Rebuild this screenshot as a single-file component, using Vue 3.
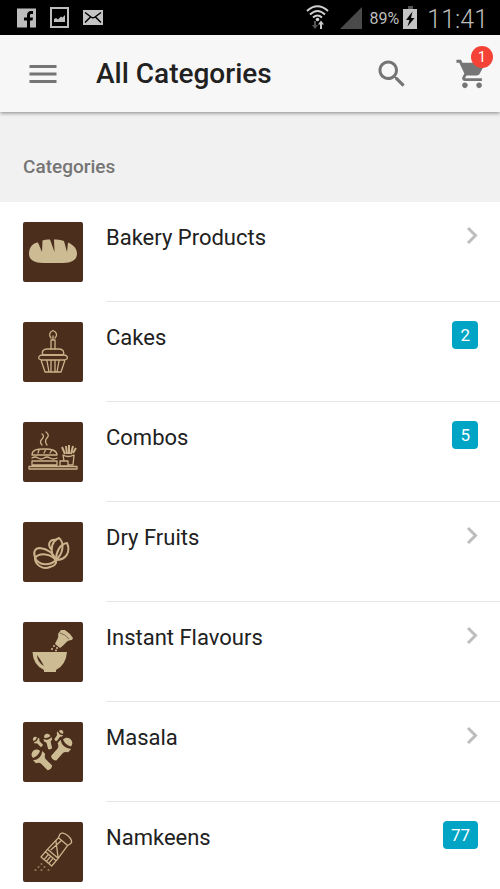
<script setup>
const categories = [
  { name: 'Bakery Products', icon: 'bread' },
  { name: 'Cakes', icon: 'cake', count: 2 },
  { name: 'Combos', icon: 'combo', count: 5 },
  { name: 'Dry Fruits', icon: 'nuts' },
  { name: 'Instant Flavours', icon: 'bowl' },
  { name: 'Masala', icon: 'cloves' },
  { name: 'Namkeens', icon: 'shaker', count: 77 },
]
const cartCount = 1

// Each clove: position, rotation and scale
const cloves = [
  'translate(17 36) rotate(-45) scale(.82)',
  'translate(40.5 25) rotate(41) scale(.88)',
  'translate(25 18) rotate(-14) scale(.52)',
  'translate(14 19) rotate(-45) scale(.4)',
  'translate(36.500 12.500) rotate(35) scale(.4)',
]
</script>

<template>
  <div class="screen">
    <div class="status">
      <svg class="st-icon" width="19" height="20" viewBox="0 0 19 20">
        <rect width="19" height="19" y="0.5" fill="#bdbdbd" />
        <path d="M10 20v-7.500H7V9.500h3V7.500C10 4.500 11.500 3 14 3h2v3h-1.500C13.300 6 13 6.500 13 7.500v2h3l-.5 3H13V20z" fill="#000" />
      </svg>
      <svg class="st-icon" width="19" height="21" viewBox="0 0 19 21">
        <rect x="1" y="1" width="17" height="19" fill="none" stroke="#bdbdbd" stroke-width="2" />
        <path d="M4 15v-3l2-1 2 1.500 3-3 1.500 1L15 8v7z" fill="#bdbdbd" />
      </svg>
      <svg class="st-icon" width="20" height="15" viewBox="0 0 20 15">
        <rect width="20" height="15" fill="#c4c4c4" />
        <path d="M2 2.500l6 4.500q2 1.500 4 0l6-4.500M2 12.500L7.500 7M18 12.500L12.500 7" fill="none" stroke="#000" stroke-width="1.500" />
      </svg>
      <span class="spacer"></span>
      <svg class="wifi" width="23" height="25" viewBox="0 0 23 25">
        <g fill="none" stroke="#d0d0d0" stroke-width="2">
          <path d="M1 6Q11.500-3.500 22 6" />
          <path d="M4 9.500Q11.500 2.500 19 9.500" />
          <path d="M7 12.500Q11.500 8.500 16 12.500" />
        </g>
        <circle cx="11.500" cy="14.500" r="1.800" fill="#d0d0d0" />
        <path d="M8 16h2v4h2l-3 4-3-4h2z" fill="#555" />
        <path d="M14 24v-4.500h-2l3-4 3 4h-2V24z" fill="#c8c8c8" />
      </svg>
      <svg class="signal" width="22" height="22" viewBox="0 0 22 22"><path d="M22 0v22H0z" fill="#4a4a4a" /></svg>
      <span class="percent">89%</span>
      <svg class="battery" width="14" height="23" viewBox="0 0 14 23">
        <rect x="5" width="5" height="3" fill="#555" />
        <rect y="3" width="14" height="20" fill="#c4c4c4" />
        <path d="M9.500 5.500L3 14h3.500L4.500 20.500 11.500 12H8z" fill="#000" />
      </svg>
      <time class="clock">11:41</time>
    </div>

    <header class="bar">
      <button class="icon-btn" type="button" aria-label="Menu">
        <svg width="36" height="36" viewBox="0 0 24 24"><path d="M3 18h18v-2H3v2zm0-5h18v-2H3v2zm0-7v2h18V6H3z" /></svg>
      </button>
      <h1 class="title">All Categories</h1>
      <button class="icon-btn" type="button" aria-label="Search">
        <svg width="36" height="36" viewBox="0 0 24 24"><path d="M15.500 14h-.79l-.28-.27C15.410 12.590 16 11.110 16 9.500 16 5.910 13.090 3 9.500 3S3 5.910 3 9.500 5.910 16 9.500 16c1.610 0 3.090-.59 4.230-1.570l.27.28v.79l5 4.990L20.490 19l-4.990-5zm-6 0C7.010 14 5 11.990 5 9.500S7.010 5 9.500 5 14 7.010 14 9.500 11.990 14 9.500 14z" /></svg>
      </button>
      <button class="icon-btn cart" type="button" aria-label="Cart">
        <svg width="34" height="34" viewBox="0 0 24 24"><path d="M7 18c-1.100 0-1.990.9-1.990 2S5.900 22 7 22s2-.9 2-2-.9-2-2-2zM1 2v2h2l3.600 7.590-1.350 2.450c-.16.280-.25.610-.25.960 0 1.100.9 2 2 2h12v-2H7.420c-.14 0-.25-.11-.25-.25l.03-.12.900-1.630h7.450c.75 0 1.410-.41 1.750-1.030l3.580-6.490c.08-.14.120-.31.120-.48 0-.55-.45-1-1-1H5.210l-.94-2H1zm16 16c-1.100 0-1.990.9-1.990 2s.89 2 1.990 2 2-.9 2-2-.9-2-2-2z" /></svg>
        <span class="cart-count">{{ cartCount }}</span>
      </button>
    </header>

    <main class="content">
      <h2 class="section">Categories</h2>
      <ul class="list">
        <li v-for="c in categories" :key="c.name">
          <a class="row" href="#">
            <svg class="tile" width="60" height="60" viewBox="0 0 60 60" aria-hidden="true">
              <g v-if="c.icon === 'bread'" class="solid">
                <path d="M6 32C6 25 10 21 15 20.500L19 30 19.500 18.500Q23 17 27 17.500L31.500 30 31 17.500Q37 17 41 19L44 30 45 20.500C51 23 54 27 54 32 54 38 48 41 40 41H20C12 41 6 38 6 32z" />
              </g>
              <g v-else-if="c.icon === 'cake'" class="line">
                <path d="M28 27V18h4v9M30 18v-4M28 16C25.500 13 26.500 10 30 8.500 33.500 10 35 13 32 16" />
                <path d="M20 33c-2-4 1-6 4-6h12c4 0 6 3 4 6z" />
                <path d="M16 37c-1-3 1-4 4-4h20c4 0 5 2 4 4l-3 1H19zM18 38l4 12h16l4-12M24 39l2 11M28 39v11M32 39v11M36 39l-2 11" />
              </g>
              <g v-else-if="c.icon === 'combo'" class="line">
                <path d="M19 23q-3-3 0-6t0-5M24 23q-3-4 0-7t-1-6" />
                <path d="M9 33C9 28 13 27 21 27S34 28 34 33zM16 28l-1 3M23 27l-2 4M29 28l-2 3" />
                <path d="M9 36q3-2 6 0t6 0 6 0 7 0M9 39h25v4H9zM6 44.500h48V47H6z" />
                <path d="M41 39l-1-6q5 3 11 0l-1 10h-5M37 39h8v5h-8z" />
                <path class="fries" d="M42 32l-3-7M44 32l-1-8M46 32v-9M48 32l2-8M50 31l3-5" />
              </g>
              <g v-else-if="c.icon === 'nuts'" class="line thick">
                <path d="M33 38C26 31 28 19 36 16 42 21 40 32 33 38z" />
                <path d="M28 27C24 22 27 17 33 18" />
                <path d="M33 38C33 30 37 22 44 21 48 30 43 38 33 38z" />
                <path d="M33 38C28 32 17 30 12 36 16 44 27 44 33 38z" />
                <path d="M12 35C10 30 12 26 17 26 25 27 30 31 33 38M12 36C12 43 20 48 27 45 31 44 34 42 33 38" />
              </g>
              <g v-else-if="c.icon === 'bowl'" class="solid">
                <path d="M9.500 30H44q-1 13-11 18v2H21v-2Q10 43 9.500 30zM14 33q0 7 7 11-3-6-7-11z" fill-rule="evenodd" />
                <path d="M32 22C34 17 36 16 35 12L38 8 42 8 47 12 50 16 49 18C43 18 42 23 37 26z" />
                <circle cx="31" cy="24" r="1" /><circle cx="34" cy="26" r="1" /><circle cx="29" cy="27" r="1" /><circle cx="33" cy="28.500" r="1" />
                <path d="M37 11q5 1 9 6" fill="none" stroke="#4b2e1c" stroke-width=".6" />
              </g>
              <g v-else-if="c.icon === 'cloves'" class="solid">
                <g v-for="t in cloves" :key="t" :transform="t">
                  <path d="M-6-6C-6-14 6-14 6-6Q0-3-6-6z" />
                  <path d="M-8-4Q-4-1 0-1 4-1 8-4L8 1Q4 3 4 6V17Q0 20-4 17V6Q-4 3-8 1z" />
                </g>
              </g>
              <g v-else class="line">
                <g transform="translate(33 28) rotate(40)">
                  <path d="M-7-14C-9-20 9-20 7-14L6-11H-6zM-6-11L-7 5H7L6-11M-7 5v10H7V5M-7 8H7M-3 9v5M0 9v5M3 9v5M-6-7L6 4M-2-10L-4 3" />
                </g>
                <path class="grains" d="M18 42h1M15 45h1M21 45h1M12 48h1M18 48h1M25 48h1" />
              </g>
            </svg>
            <span class="body">
              <span class="name">{{ c.name }}</span>
              <span class="end">
                <span v-if="c.count" class="count">{{ c.count }}</span>
                <svg v-else width="12" height="19" viewBox="0 0 12 19" aria-hidden="true"><path d="M2 2l7.500 7.500L2 17" fill="none" stroke="#bdbdbd" stroke-width="3" /></svg>
              </span>
            </span>
          </a>
        </li>
      </ul>
    </main>
  </div>
</template>

<style>
body {
  background: #fff;
}
</style>

<style scoped>
.screen {
  display: flex;
  flex-direction: column;
  height: 100vh;
  overflow: hidden;
  font-family: Roboto, "Liberation Sans", sans-serif;
  color: #212121;
}
.status {
  flex: none;
  display: flex;
  align-items: center;
  height: 35px;
  padding: 0 12px 0 17px;
  background: #000;
  color: #bdbdbd;
}
.status svg {
  flex: none;
}
.st-icon {
  margin-right: 14px;
}
.spacer {
  flex: 1;
}
.wifi {
  margin-right: 11px;
}
.signal {
  margin-right: 8px;
}
.percent {
  font-size: 16px;
  line-height: 24px;
  padding-top: 2px;
  margin-right: 4px;
}
.battery {
  margin-right: 10px;
}
.clock {
  font-size: 25px;
  font-weight: 300;
  line-height: 30px;
  padding-top: 4px;
}
.bar {
  position: relative;
  z-index: 1;
  flex: none;
  display: flex;
  align-items: center;
  height: 77px;
  padding: 0 11px 0 25px;
  background: #f7f7f7;
  box-shadow: 0 1px 4px rgba(0, 0, 0, 0.45);
}
.icon-btn {
  flex: none;
  display: flex;
  padding: 0;
  border: 0;
  background: none;
  cursor: pointer;
}
.icon-btn svg {
  fill: #757575;
}
.title {
  flex: 1;
  margin: 0 0 0 35px;
  font-size: 28px;
  font-weight: 500;
  line-height: 36px;
}
.cart {
  position: relative;
  margin-left: 45px;
}
.cart-count {
  position: absolute;
  top: -11px;
  left: 16px;
  width: 22px;
  border-radius: 50%;
  background: #f44336;
  color: #fff;
  font-family: Roboto, "Liberation Sans", sans-serif;
  font-size: 14px;
  line-height: 22px;
  text-align: center;
}
.content {
  flex: 1;
  min-height: 0;
  overflow-y: auto;
  scrollbar-width: none;
}
.section {
  margin: 0;
  padding: 43px 23px 23px;
  background: #f1f1f1;
  color: #757575;
  font-size: 19px;
  font-weight: 500;
  line-height: 24px;
}
.list {
  margin: 0;
  padding: 0;
  list-style: none;
}
.row {
  display: flex;
  padding-left: 23px;
  color: inherit;
  text-decoration: none;
}
.tile {
  flex: none;
  margin: 20px 23px 20px 0;
  border-radius: 2px;
  background: #4b2e1c;
}
.solid {
  fill: #cdbb94;
}
.line {
  fill: none;
  stroke: #cdb38b;
  stroke-width: 1.3;
  stroke-linejoin: round;
  stroke-linecap: round;
}
.thick {
  stroke-width: 2;
}
.fries {
  stroke-width: 2;
  stroke-linecap: butt;
}
.grains {
  stroke-width: 1;
}
.body {
  flex: 1;
  display: flex;
  align-items: flex-start;
  min-height: 99px;
  border-bottom: 1px solid #e6e6e6;
}
.name {
  flex: 1;
  padding-top: 22px;
  font-size: 22px;
  line-height: 28px;
}
.end {
  display: flex;
  align-items: center;
  height: 28px;
  margin: 19px 22px 0 0;
}
.count {
  padding: 0 8px;
  border-radius: 4px;
  background: #00a5c5;
  color: #fff;
  font-size: 17px;
  line-height: 28px;
}
</style>
